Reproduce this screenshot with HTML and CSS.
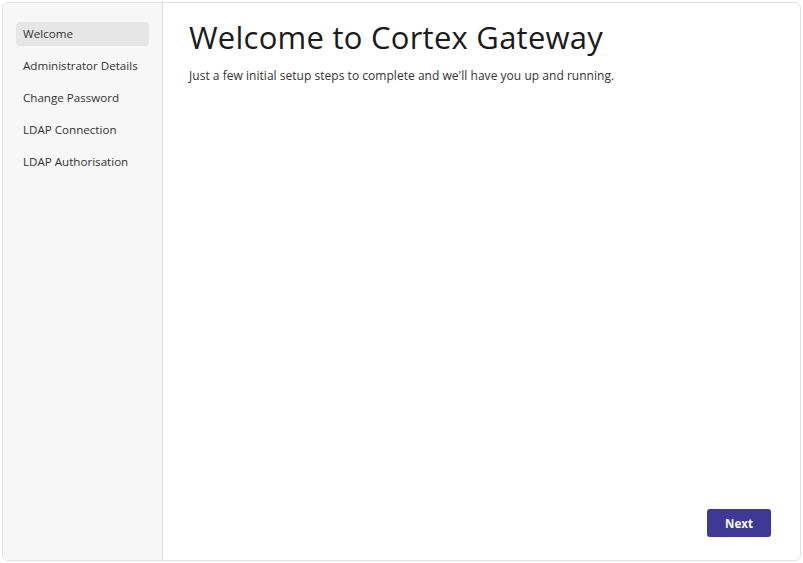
FILE: index.html
```html
<!DOCTYPE html>
<html lang="en">
<head>
<meta charset="utf-8">
<title>Cortex Gateway Setup</title>
<link rel="stylesheet" href="styles.css">
</head>
<body>
<div class="card">
  <nav class="sidebar">
    <a class="step active">Welcome</a>
    <a class="step">Administrator Details</a>
    <a class="step">Change Password</a>
    <a class="step">LDAP Connection</a>
    <a class="step">LDAP Authorisation</a>
  </nav>
  <main class="content">
    <h1 class="title">Welcome to Cortex Gateway</h1>
    <p class="lead">Just a few initial setup steps to complete and we'll have you up and running.</p>
    <div class="actions">
      <button class="next">Next</button>
    </div>
  </main>
</div>
</body>
</html>
```
FILE: styles.css
```css
html, body {
  margin: 0;
  padding: 0;
  background: #ffffff;
}
body {
  padding: 2px;
  height: 563px;
  box-sizing: border-box;
  font-family: "Open Sans", "Noto Sans", sans-serif;
  color: #222;
}
.card {
  display: flex;
  height: 559px;
  box-sizing: border-box;
  width: 799px;
  border: 1px solid #e2e2e2;
  border-radius: 6px;
  overflow: hidden;
  background: #fff;
}
.sidebar {
  width: 160px;
  flex: none;
  box-sizing: border-box;
  background: #f7f7f7;
  border-right: 1px solid #e0e0e0;
  padding: 19px 13px 0 13px;
  display: flex;
  flex-direction: column;
  gap: 8px;
}
.step {
  display: block;
  height: 24px;
  line-height: 24px;
  padding: 0 6px 0 7px;
  border-radius: 4px;
  font-size: 11.6px;
  color: #333;
  white-space: nowrap;
}
.step.active {
  background: #e6e6e6;
}
.content {
  flex: 1;
  display: flex;
  flex-direction: column;
  padding: 14px 29px 23px 26px;
}
.title {
  margin: 0;
  font-size: 31px;
  font-weight: 400;
  line-height: 40px;
  color: #1b1b1b;
  letter-spacing: 0.25px;
}
.lead {
  margin: 11px 0 0 0;
  font-size: 12px;
  line-height: 16px;
  letter-spacing: 0.03px;
  color: #333;
}
.actions {
  margin-top: auto;
  display: flex;
  justify-content: flex-end;
}
.next {
  width: 64px;
  height: 28px;
  border: none;
  border-radius: 3px;
  background: #3d3994;
  color: #fff;
  font-family: "Open Sans", sans-serif;
  font-weight: 700;
  font-size: 11.5px;
  padding: 0;
}
```
